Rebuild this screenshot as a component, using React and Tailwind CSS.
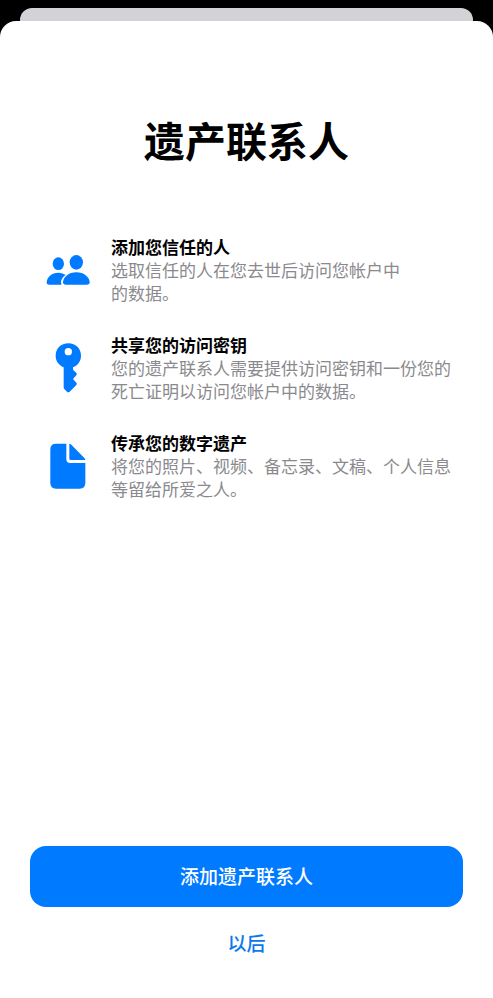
function PeopleIcon() {
  return (
    <svg width="44" height="30" viewBox="0 0 132 90" fill="currentColor" aria-hidden="true">
      <ellipse cx="37" cy="26" rx="17" ry="19" />
      <ellipse cx="91" cy="22" rx="20" ry="22" />
      <path d="M10 89Q2 89 2 83C2 67 17 53 37 53C46 53 53 56 59 60C50 66 45 74 45 82Q45 86 47 89Z" />
      <path d="M60 89Q51 89 51 82C51 67 68 52 91 52C114 52 131 67 131 82Q131 89 122 89Z" />
    </svg>
  );
}

function KeyIcon() {
  return (
    <svg width="27" height="50" viewBox="0 0 81 150" fill="currentColor" aria-hidden="true">
      <path
        fillRule="evenodd"
        d="M40 1C18 1 2 17 2 38C2 54 11 66 26 73V133Q26 136 28 138L36 146Q40 149 44 146L64 126Q67 122 64 119L54 108L64 97Q67 93 64 90L54 80V73C69 67 78 54 78 38C78 17 62 1 40 1ZM40 15A11 11 0 1 1 40 37A11 11 0 1 1 40 15Z"
      />
    </svg>
  );
}

function DocumentIcon() {
  return (
    <svg width="36" height="46" viewBox="0 0 108 138" fill="currentColor" aria-hidden="true">
      <path d="M18 2H49V49Q49 60 60 60H106V120Q106 137 89 137H18Q1 137 1 120V19Q1 2 18 2Z" />
      <path d="M58 2Q61 2 64 5L103 45Q106 48 106 51H62Q58 51 58 47Z" />
    </svg>
  );
}

const features = [
  {
    Icon: PeopleIcon,
    title: "添加您信任的人",
    lines: ["选取信任的人在您去世后访问您帐户中", "的数据。"],
  },
  {
    Icon: KeyIcon,
    title: "共享您的访问密钥",
    lines: ["您的遗产联系人需要提供访问密钥和一份您的", "死亡证明以访问您帐户中的数据。"],
  },
  {
    Icon: DocumentIcon,
    title: "传承您的数字遗产",
    lines: ["将您的照片、视频、备忘录、文稿、个人信息", "等留给所爱之人。"],
  },
];

export default function App() {
  return (
    <div
      lang="zh-CN"
      className="flex min-h-screen flex-col bg-black pt-2 font-['Noto_Sans_CJK_SC',sans-serif]"
    >
      <div className="mx-5 h-[13px] rounded-t-xl bg-[#d3d3d7]" />
      <main className="flex grow flex-col rounded-t-2xl bg-white pt-[94px] pb-[31px]">
        <h1 className="text-center text-[41px] leading-12 font-bold text-black">遗产联系人</h1>
        <ul className="mt-18 flex flex-col gap-[29px] pr-8 pl-[46px]">
          {features.map(({ Icon, title, lines }) => (
            <li key={title} className="flex items-center gap-[21px]">
              <span className="flex w-11 shrink-0 justify-center text-[#007aff]">
                <Icon />
              </span>
              <div className="text-[17px] leading-[23px]">
                <h2 className="font-bold text-black">{title}</h2>
                <p className="text-[#8a8a8e]">
                  {lines[0]}
                  <br />
                  {lines[1]}
                </p>
              </div>
            </li>
          ))}
        </ul>
        <div className="mt-auto flex flex-col px-[30px] text-[19px] font-medium">
          <button type="button" className="h-[61px] rounded-2xl bg-[#007aff] text-white">
            添加遗产联系人
          </button>
          <button type="button" className="mt-3 h-12 self-center px-6 text-[#0a78ee]">
            以后
          </button>
        </div>
      </main>
    </div>
  );
}
